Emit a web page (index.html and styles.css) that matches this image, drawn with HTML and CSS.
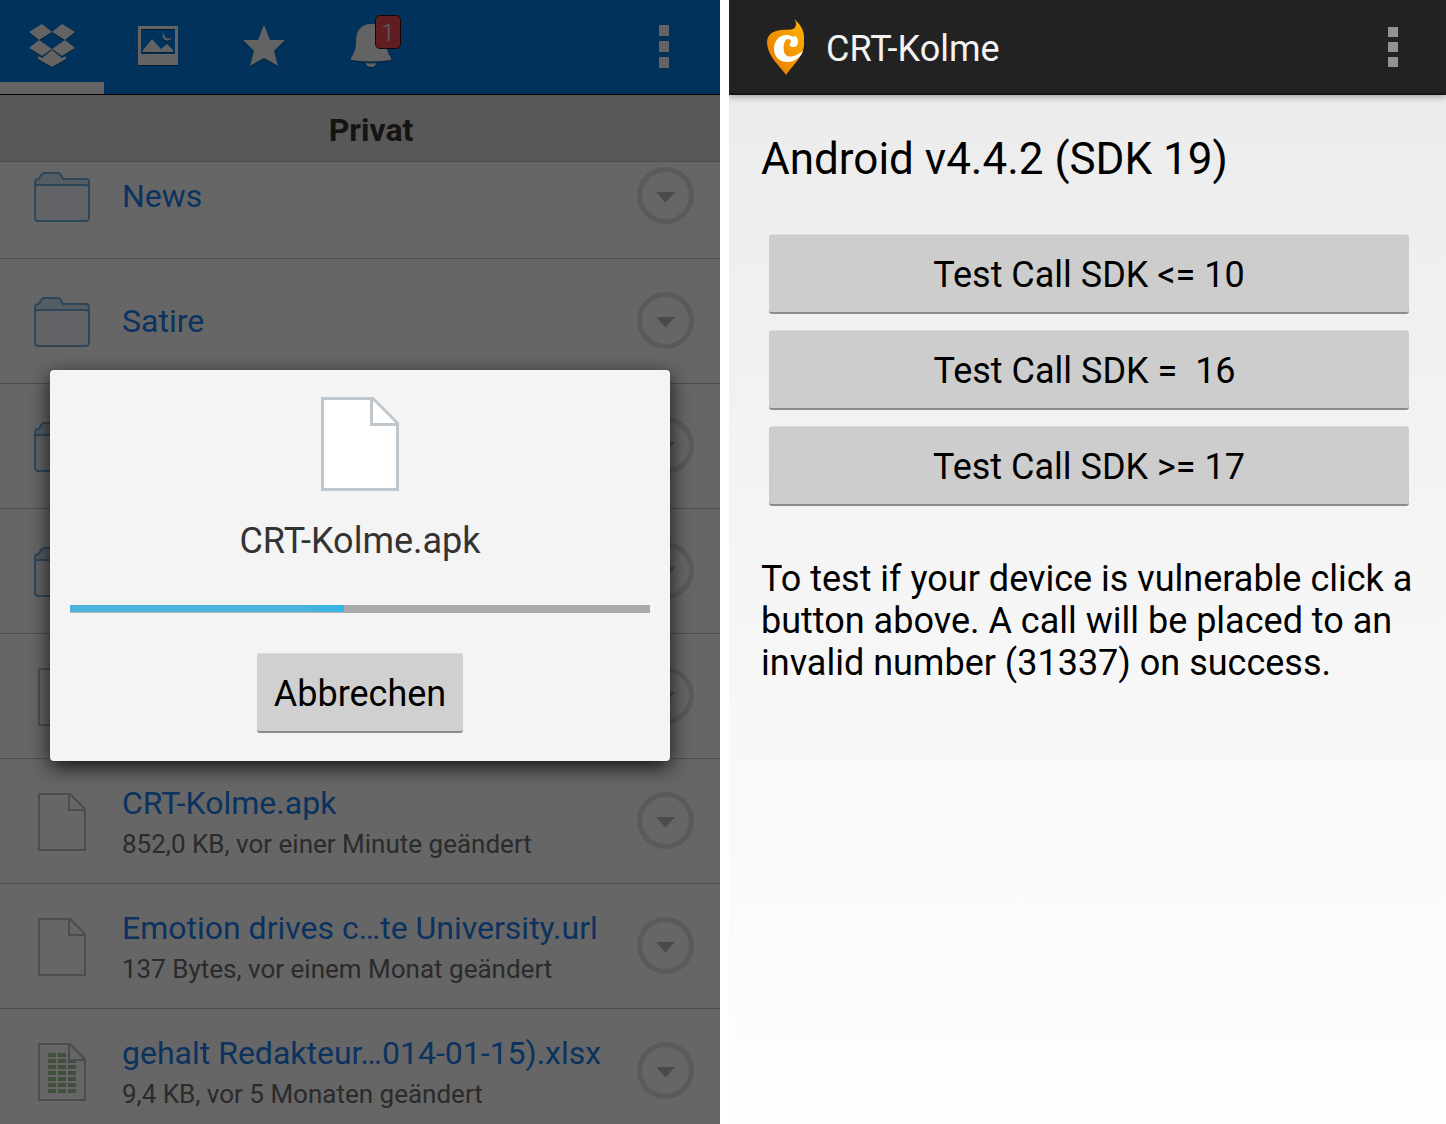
FILE: index.html
```html
<!DOCTYPE html>
<html lang="de">
  <head>
    <meta charset="UTF-8" />
    <meta name="viewport" content="width=device-width, initial-scale=1.0" />
    <link rel="stylesheet" href="styles.css">
    <title>CRT-Kolme</title>
  </head>
  <body>
    <!-- shared icons -->
    <svg class="sprite" width="0" height="0" aria-hidden="true">
      <symbol id="folder" viewBox="0 0 56 50">
        <path d="M1 45V10Q1 7 5 7Q7 3 8 2Q9 1 11 1H24Q26 1 27 3L29 7H52Q55 7 55 10V45Q55 49 52 49H4Q1 49 1 45Z" fill="#d2e6fa" />
        <path d="M1 17Q1 13 4 13H52Q55 13 55 17V45Q55 49 52 49H4Q1 49 1 45Z" fill="#f3f8ff" />
        <path d="M1 45V10Q1 7 5 7Q7 3 8 2Q9 1 11 1H24Q26 1 27 3L29 7H52Q55 7 55 10V45Q55 49 52 49H4Q1 49 1 45ZM1 17Q1 13 4 13H52Q55 13 55 17" fill="none" stroke="#76aede" stroke-width="2" />
      </symbol>
      <symbol id="file" viewBox="0 0 48 58">
        <path d="M1 1H32L47 16V57H1Z" fill="#fff" stroke="#bcc2c9" stroke-width="2" />
        <path d="M31 1V17H47" fill="none" stroke="#bcc2c9" stroke-width="2" />
      </symbol>
      <symbol id="sheet" viewBox="0 0 48 58">
        <path d="M1 1H32L47 16V57H1Z" fill="#fff" stroke="#bcc2c9" stroke-width="2" />
        <path d="M10 12h28M10 18h28M10 24h28M10 30h28M10 36h28M10 42h28M10 48h28" stroke="#a0c896" stroke-width="4" stroke-dasharray="8 2" />
        <path d="M31 1V17H47L32 1Z" fill="#fff" stroke="#bcc2c9" stroke-width="2" />
      </symbol>
      <symbol id="more" viewBox="0 0 57 57">
        <circle cx="28.500" cy="28.500" r="26" fill="none" stroke="#e1e1e1" stroke-width="5" />
        <path d="M19 25H38L28.500 35.500Z" fill="#b8b8b8" />
      </symbol>
    </svg>

    <div class="screens">
      <section class="screen dropbox">
        <header class="tabs">
          <a href="#files" class="tab active" aria-label="Dateien">
            <svg width="46" height="44" viewBox="0 0 46 44">
              <path d="M13 0L23 8L10 16L0 8ZM33 0L46 8L36 16L23 8ZM10 16L23 25L13 32L0 24ZM36 16L46 24L33 32L23 25ZM23 26L33 34L37 32V35L23 43L9 35V32L13 34Z" />
            </svg>
          </a>
          <a href="#photos" class="tab" aria-label="Fotos">
            <svg width="40" height="40" viewBox="0 0 40 40">
              <path fill-rule="evenodd" d="M0 0H40V39H0ZM3 3V28H37V3Z" />
              <path d="M5 26V24L14 13L23 23L29 18L35 24V26ZM26 6Q25 9 28 12Q30 13 34 12Q31 16 27 14Q23 11 26 6Z" />
            </svg>
          </a>
          <a href="#favorites" class="tab" aria-label="Favoriten">
            <svg width="44" height="42" viewBox="0 0 44 42">
              <path d="M22 0L28 15H43L32 26L36 41L22 33L8 41L12 26L1 15H16Z" />
            </svg>
          </a>
          <a href="#notifications" class="tab" aria-label="Benachrichtigungen">
            <svg width="40" height="44" viewBox="0 0 40 44">
              <path d="M20 0C9 0 5 8 5 17C5 26 3 29 0 34V36Q20 39 40 36V34C37 29 35 26 35 17C35 8 31 0 20 0ZM15 39Q20 40 25 39Q25 43 20 43Q15 43 15 39Z" />
            </svg>
            <span class="badge">1</span>
          </a>
          <button class="overflow" aria-label="Menü"><i></i><i></i><i></i></button>
        </header>
        <h2 class="folder-title">Privat</h2>
        <ul class="files">
          <li>
            <svg class="icon folder"><use href="#folder" /></svg>
            <div class="meta"><a href="#news" class="name">News</a></div>
            <button class="more" aria-label="Optionen"><svg><use href="#more" /></svg></button>
          </li>
          <li>
            <svg class="icon folder"><use href="#folder" /></svg>
            <div class="meta"><a href="#satire" class="name">Satire</a></div>
            <button class="more" aria-label="Optionen"><svg><use href="#more" /></svg></button>
          </li>
          <li>
            <svg class="icon folder"><use href="#folder" /></svg>
            <div class="meta"></div>
            <button class="more" aria-label="Optionen"><svg><use href="#more" /></svg></button>
          </li>
          <li>
            <svg class="icon folder"><use href="#folder" /></svg>
            <div class="meta"></div>
            <button class="more" aria-label="Optionen"><svg><use href="#more" /></svg></button>
          </li>
          <li>
            <svg class="icon file"><use href="#file" /></svg>
            <div class="meta"></div>
            <button class="more" aria-label="Optionen"><svg><use href="#more" /></svg></button>
          </li>
          <li>
            <svg class="icon file"><use href="#file" /></svg>
            <div class="meta">
              <a href="#apk" class="name">CRT-Kolme.apk</a>
              <span class="info">852,0 KB, vor einer Minute geändert</span>
            </div>
            <button class="more" aria-label="Optionen"><svg><use href="#more" /></svg></button>
          </li>
          <li>
            <svg class="icon file"><use href="#file" /></svg>
            <div class="meta">
              <a href="#url" class="name">Emotion drives c…te University.url</a>
              <span class="info">137 Bytes, vor einem Monat geändert</span>
            </div>
            <button class="more" aria-label="Optionen"><svg><use href="#more" /></svg></button>
          </li>
          <li>
            <svg class="icon file"><use href="#sheet" /></svg>
            <div class="meta">
              <a href="#xlsx" class="name">gehalt Redakteur…014-01-15).xlsx</a>
              <span class="info">9,4 KB, vor 5 Monaten geändert</span>
            </div>
            <button class="more" aria-label="Optionen"><svg><use href="#more" /></svg></button>
          </li>
        </ul>

        <div class="overlay">
          <div class="dialog" role="dialog" aria-labelledby="download-name">
            <svg width="78" height="94" viewBox="0 0 78 94">
              <path d="M1.500 1.500H52L76.500 26V92.500H1.500Z" fill="#fff" stroke="#bfc6cc" stroke-width="3" />
              <path d="M50.500 1.500V27.500H76.500" fill="none" stroke="#bfc6cc" stroke-width="3" />
            </svg>
            <label id="download-name" class="download-name" for="download">CRT-Kolme.apk</label>
            <progress id="download" value="274" max="580"></progress>
            <button class="btn">Abbrechen</button>
          </div>
        </div>
      </section>

      <section class="screen kolme" lang="en">
        <header class="bar">
          <svg width="38" height="56" viewBox="0 0 38 56">
            <defs>
              <linearGradient id="flame" x1="0" y1="1" x2="1" y2="0">
                <stop offset="0" stop-color="#e87800" />
                <stop offset="1" stop-color="#fcb404" />
              </linearGradient>
            </defs>
            <path d="M27 0C32 4 37 10 37 18V27C36 38 24 48 19 56C13 47 1 38 0 24C0 15 6 12 14 11C21 10 26 12 28 8C30 5 29 3 27 0Z" fill="url(#flame)" />
            <path d="M20 16C23 16 25 17 26 18C29 16 31 19 31 23C31 26 29 28 26 28C22 28 22 25 24 23C24 20 21 19 19 21C16 24 16 32 18 35C22 40 29 37 36 32C34 38 28 43 20 43C12 43 7 37 7 30C7 22 12 16 20 16Z" fill="#fff" />
          </svg>
          <h1>CRT-Kolme</h1>
          <button class="overflow" aria-label="Menu"><i></i><i></i><i></i></button>
        </header>
        <main>
          <h2>Android v4.4.2 (SDK 19)</h2>
          <div class="tests">
            <button class="btn">Test Call SDK &lt;= 10</button>
            <button class="btn">Test Call SDK =&nbsp; 16&nbsp;</button>
            <button class="btn">Test Call SDK &gt;= 17</button>
          </div>
          <p>To test if your device is vulnerable click a button above. A call will be placed to an invalid number (31337) on success.</p>
        </main>
      </section>
    </div>
  </body>
</html>
```
FILE: styles.css
```css
* {
  box-sizing: border-box;
}

body {
  margin: 0;
  background-color: white;
  font-family: Roboto, sans-serif;
}

h1,
h2,
p,
ul {
  margin: 0;
  padding: 0;
}

button {
  border: none;
  padding: 0;
  background: none;
  font-family: inherit;
  cursor: pointer;
}

a {
  text-decoration: none;
}

svg {
  flex: none;
  display: block;
}

.sprite {
  position: absolute;
}

.screens {
  display: flex;
  gap: 9px;
  height: 100vh;
}

.screen {
  flex: 1;
  min-width: 0;
  display: flex;
  flex-direction: column;
  overflow: hidden;
}

.overflow {
  display: flex;
  flex-direction: column;
  gap: 5px;
  margin-left: auto;
}

.overflow i {
  width: 10px;
  height: 11px;
  background-color: #fafafa;
}

.btn {
  height: 80px;
  padding: 3px 17px 0;
  border-radius: 3px;
  border-top: 1px solid #dcdcdc;
  border-bottom: 2px solid #8c8c8c;
  background-color: #cdcdcd;
  color: black;
  font-size: 36px;
  white-space: pre;
}

/* Dropbox */

.dropbox {
  position: relative;
  flex: 0 0 auto;
  width: calc(50% - 3px);
  background-color: white;
}

.tabs {
  flex: none;
  display: flex;
  align-items: center;
  height: 95px;
  padding: 0 51px 2px 0;
  background-color: #007ee5;
  border-bottom: 1px solid black;
  z-index: 1;
}

.tab {
  position: relative;
  display: flex;
  align-items: center;
  justify-content: center;
  width: 106px;
  height: 48px;
  padding-right: 1px;
  border-right: 1px solid #0074d3;
}

.tab:nth-child(4) {
  border-right: none;
}

.tab svg {
  fill: #f8f8f8;
  filter: drop-shadow(0 1px 0 #004880);
}

.tab.active::after {
  content: "";
  position: absolute;
  left: 0;
  right: 1px;
  bottom: -24px;
  height: 12px;
  background-color: #f8f8f8;
}

.badge {
  position: absolute;
  top: -7px;
  right: 23px;
  width: 26px;
  height: 34px;
  border: 1px solid #3c0a0c;
  border-radius: 5px;
  background-color: #f04c58;
  color: #eee;
  font-size: 24px;
  font-weight: 300;
  line-height: 34px;
  text-align: center;
}

.folder-title {
  flex: none;
  height: 67px;
  background-color: #dcdcdc;
  border-bottom: 1px solid #bebebe;
  color: #333;
  padding-left: 22px;
  font-size: 32px;
  line-height: 70px;
  text-align: center;
  z-index: 1;
}

/* scrolled so that the first row is partly under the title */
.files {
  margin-top: -28px;
  list-style-type: none;
}

.files li {
  display: flex;
  align-items: center;
  height: 125px;
  padding: 0 26px 0 34px;
  border-bottom: 1px solid #c4c4c4;
}

.icon.folder {
  width: 56px;
  height: 50px;
  margin: 2px 32px 0 0;
}

.icon.file {
  width: 48px;
  height: 58px;
  margin: 2px 36px 0 4px;
}

.meta {
  flex: 1;
  min-width: 0;
  white-space: nowrap;
}

.file + .meta {
  padding-top: 6px;
}

.name {
  display: block;
  color: #2080ee;
  font-size: 32px;
  line-height: 40px;
}

.info {
  display: block;
  color: #6b6b6b;
  font-size: 26px;
  line-height: 42px;
}

.more {
  padding-bottom: 2px;
}

.more svg {
  width: 57px;
  height: 57px;
}

.overlay {
  position: absolute;
  inset: 0;
  z-index: 2;
  display: flex;
  align-items: center;
  padding: 7px 50px 0;
  background-color: rgba(0, 0, 0, 0.6);
}

.dialog {
  flex: 1;
  display: flex;
  flex-direction: column;
  align-items: center;
  padding: 27px 20px 28px;
  border-radius: 4px;
  background-color: #f4f4f4;
  box-shadow: 0 6px 20px rgba(0, 0, 0, 0.8);
}

.download-name {
  margin-top: 28px;
  color: #333;
  font-size: 36px;
  line-height: 44px;
}

progress {
  appearance: none;
  width: 100%;
  height: 8px;
  margin: 42px 0 40px;
  border: none;
}

progress::-webkit-progress-bar {
  background-color: #aaa;
}

progress::-webkit-progress-value {
  background-image: linear-gradient(to right, #4bb3dd 85%, #33b5e5);
  border-bottom: 1px solid #b4b4b4;
}

.dialog .btn {
  background-color: #d0d0d0;
}

/* CRT-Kolme */

.kolme {
  background-image: linear-gradient(to bottom, #eaeaea, #f4f4f4 45%, #fefefe);
}

.bar {
  display: flex;
  align-items: center;
  height: 95px;
  padding: 0 48px 0 38px;
  background-color: #222;
  border-bottom: 2px solid #161616;
  box-shadow: 0 1px 8px rgba(0, 0, 0, 0.4);
}

.bar h1 {
  margin-left: 21px;
  padding-top: 5px;
  color: #f3f3f3;
  font-size: 36px;
  font-weight: 400;
}

.bar .overflow i {
  height: 10px;
  background-color: #929292;
}

main {
  padding: 34px 29px 0 32px;
  color: black;
}

main h2 {
  font-size: 44px;
  font-weight: 400;
  line-height: 60px;
}

.tests {
  display: flex;
  flex-direction: column;
  gap: 16px;
  margin: 45px 8px 52px;
}

main p {
  font-size: 36px;
  line-height: 42px;
}
```
